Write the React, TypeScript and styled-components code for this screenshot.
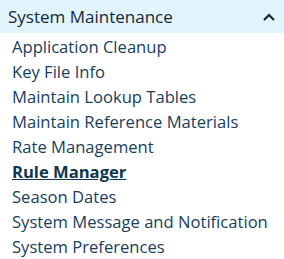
import styled, { createGlobalStyle } from "styled-components";

const GlobalStyle = createGlobalStyle`
  body {
    margin: 0;
    background: #ffffff;
    font-family: "Open Sans", "Noto Sans", sans-serif;
  }
`;

const Panel = styled.nav`
  width: 284px;
`;

const Header = styled.div`
  display: flex;
  align-items: center;
  justify-content: space-between;
  height: 33px;
  padding: 0 8px;
  background-color: #e1f4fc;
  color: #14283a;
  font-size: 17px;
  box-sizing: border-box;
`;

const Chevron = styled.svg`
  width: 14px;
  height: 14px;
`;

const List = styled.ul`
  list-style: none;
  margin: 0;
  padding: 1px 0 0 12px;
`;

const Item = styled.li<{ $active?: boolean }>`
  height: 25px;
  line-height: 25px;
  font-size: 16.6px;
  color: ${(p) => (p.$active ? "#0d3550" : "#17405e")};
  font-weight: ${(p) => (p.$active ? 700 : 400)};
  text-decoration: ${(p) => (p.$active ? "underline" : "none")};
  white-space: nowrap;
`;

const items = [
  "Application Cleanup",
  "Key File Info",
  "Maintain Lookup Tables",
  "Maintain Reference Materials",
  "Rate Management",
  "Rule Manager",
  "Season Dates",
  "System Message and Notification",
  "System Preferences",
];

export default function App() {
  return (
    <>
      <GlobalStyle />
      <Panel>
        <Header>
          <span>System Maintenance</span>
          <Chevron viewBox="0 0 14 14">
            <path d="M2 10 L7 5 L12 10" fill="none" stroke="#14283a" strokeWidth="2.2" />
          </Chevron>
        </Header>
        <List>
          {items.map((label) => (
            <Item key={label} $active={label === "Rule Manager"}>
              {label}
            </Item>
          ))}
        </List>
      </Panel>
    </>
  );
}
